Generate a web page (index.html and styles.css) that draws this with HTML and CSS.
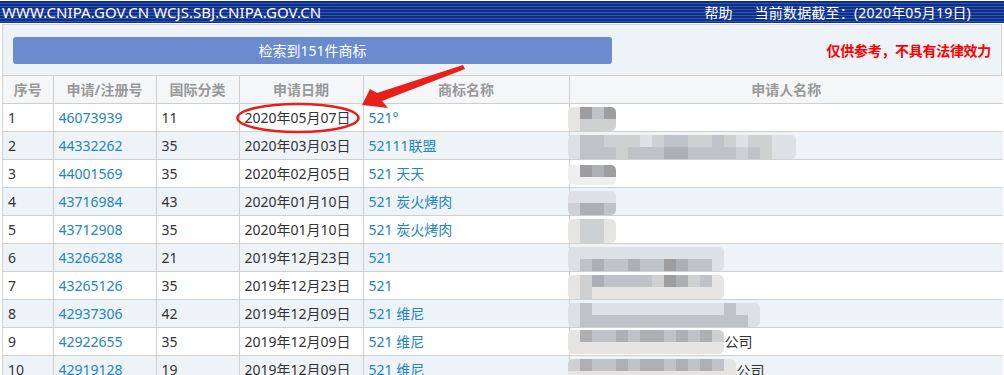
FILE: index.html
```html
<!DOCTYPE html>
<html lang="zh-CN">
<head>
<meta charset="utf-8">
<title>商标检索</title>
<link rel="stylesheet" href="styles.css">
</head>
<body>
<div class="topbar">
  <span class="site">WWW.CNIPA.GOV.CN WCJS.SBJ.CNIPA.GOV.CN</span>
  <span class="help">帮助</span>
  <span class="date">当前数据截至：(2020年05月19日)</span>
</div>
<div class="panel">
  <div class="toolbar">
    <div class="result-btn">检索到151件商标</div>
    <div class="notice">仅供参考，不具有法律效力</div>
  </div>
  <table class="grid">
    <colgroup>
      <col class="c-no"><col class="c-reg"><col class="c-cls"><col class="c-date"><col class="c-name"><col class="c-app">
    </colgroup>
    <thead>
      <tr><th>序号</th><th>申请/注册号</th><th>国际分类</th><th>申请日期</th><th>商标名称</th><th>申请人名称</th></tr>
    </thead>
    <tbody>
      <tr><td>1</td><td class="lnk">46073939</td><td>11</td><td>2020年05月07日</td><td class="lnk">521°</td>
        <td><span class="mosaic"><i class="a"></i><i class="a"></i><i class="e"></i><i class="b"></i><i class="c"></i><i class="b"></i><i class="e"></i><i class="b"></i></span></td></tr>
      <tr><td>2</td><td class="lnk">44332262</td><td>35</td><td>2020年03月03日</td><td class="lnk">52111联盟</td>
        <td><span class="mosaic"><i class="f"></i><i class="f"></i><i class="c"></i><i class="c"></i><i class="c"></i><i class="c"></i><i class="b"></i><i class="c"></i><i class="b"></i><i class="b"></i><i class="b"></i><i class="c"></i><i class="f"></i><i class="c"></i><i class="b"></i><i class="c"></i><i class="c"></i><i class="d"></i><i class="c"></i><i class="d"></i><i class="b"></i><i class="c"></i><i class="b"></i><i class="c"></i><i class="c"></i><i class="c"></i><i class="b"></i><i class="c"></i><i class="f"></i><i class="b"></i><i class="b"></i><i class="c"></i><i class="b"></i><i class="b"></i><i class="f"></i><i class="f"></i><i class="f"></i><i class="f"></i></span></td></tr>
      <tr><td>3</td><td class="lnk">44001569</td><td>35</td><td>2020年02月05日</td><td class="lnk">521 天天</td>
        <td><span class="mosaic m-one"><i class="w"></i><i class="w"></i><i class="e"></i><i class="w"></i><i class="d"></i><i class="w"></i><i class="e"></i><i class="w"></i></span></td></tr>
      <tr><td>4</td><td class="lnk">43716984</td><td>43</td><td>2020年01月10日</td><td class="lnk">521 炭火烤肉</td>
        <td><span class="mosaic"><i class="f"></i><i class="b"></i><i class="f"></i><i class="d"></i><i class="f"></i><i class="d"></i><i class="f"></i><i class="c"></i></span></td></tr>
      <tr><td>5</td><td class="lnk">43712908</td><td>35</td><td>2020年01月10日</td><td class="lnk">521 炭火烤肉</td>
        <td><span class="mosaic"><i class="a"></i><i class="a"></i><i class="b"></i><i class="b"></i><i class="b"></i><i class="b"></i><i class="a"></i><i class="a"></i></span></td></tr>
      <tr><td>6</td><td class="lnk">43266288</td><td>21</td><td>2019年12月23日</td><td class="lnk">521</td>
        <td><span class="mosaic"><i class="f"></i><i class="f"></i><i class="f"></i><i class="c"></i><i class="f"></i><i class="d"></i><i class="f"></i><i class="c"></i><i class="f"></i><i class="c"></i><i class="f"></i><i class="d"></i><i class="f"></i><i class="c"></i><i class="f"></i><i class="c"></i><i class="f"></i><i class="e"></i><i class="f"></i><i class="d"></i><i class="f"></i><i class="c"></i><i class="f"></i><i class="c"></i><i class="f"></i><i class="f"></i></span></td></tr>
      <tr><td>7</td><td class="lnk">43265126</td><td>35</td><td>2019年12月23日</td><td class="lnk">521</td>
        <td><span class="mosaic"><i class="a"></i><i class="a"></i><i class="b"></i><i class="b"></i><i class="d"></i><i class="a"></i><i class="c"></i><i class="a"></i><i class="c"></i><i class="a"></i><i class="c"></i><i class="a"></i><i class="c"></i><i class="a"></i><i class="b"></i><i class="a"></i><i class="e"></i><i class="a"></i><i class="d"></i><i class="a"></i><i class="b"></i><i class="a"></i><i class="c"></i><i class="a"></i><i class="a"></i><i class="a"></i></span></td></tr>
      <tr><td>8</td><td class="lnk">42937306</td><td>42</td><td>2019年12月09日</td><td class="lnk">521 维尼</td>
        <td><span class="mosaic"><i class="f"></i><i class="f"></i><i class="c"></i><i class="c"></i><i class="f"></i><i class="c"></i><i class="f"></i><i class="c"></i><i class="f"></i><i class="c"></i><i class="f"></i><i class="c"></i><i class="f"></i><i class="c"></i><i class="f"></i><i class="c"></i><i class="f"></i><i class="c"></i><i class="f"></i><i class="c"></i><i class="f"></i><i class="c"></i><i class="f"></i><i class="c"></i><i class="f"></i><i class="c"></i><i class="c"></i><i class="c"></i><i class="f"></i><i class="c"></i><i class="f"></i><i class="f"></i></span></td></tr>
      <tr><td>9</td><td class="lnk">42922655</td><td>35</td><td>2019年12月09日</td><td class="lnk">521 维尼</td>
        <td><span class="mosaic"><i class="a"></i><i class="a"></i><i class="d"></i><i class="a"></i><i class="c"></i><i class="a"></i><i class="c"></i><i class="a"></i><i class="d"></i><i class="a"></i><i class="c"></i><i class="a"></i><i class="d"></i><i class="a"></i><i class="d"></i><i class="a"></i><i class="c"></i><i class="a"></i><i class="d"></i><i class="a"></i><i class="c"></i><i class="a"></i><i class="d"></i><i class="a"></i><i class="b"></i><i class="a"></i></span><span class="tail">公司</span></td></tr>
      <tr><td>10</td><td class="lnk">42919128</td><td>19</td><td>2019年12月09日</td><td class="lnk">521 维尼</td>
        <td><span class="mosaic"><i class="b"></i><i class="a"></i><i class="d"></i><i class="a"></i><i class="c"></i><i class="a"></i><i class="c"></i><i class="a"></i><i class="d"></i><i class="a"></i><i class="c"></i><i class="a"></i><i class="d"></i><i class="a"></i><i class="d"></i><i class="a"></i><i class="c"></i><i class="a"></i><i class="d"></i><i class="a"></i><i class="c"></i><i class="a"></i><i class="d"></i><i class="a"></i><i class="c"></i><i class="a"></i><i class="a"></i><i class="a"></i></span><span class="tail">公司</span></td></tr>
    </tbody>
  </table>
</div>
<svg class="annot" width="1004" height="375" viewBox="0 0 1004 375" aria-hidden="true">
  <ellipse cx="298" cy="118" rx="60.5" ry="14" fill="none" stroke="#e8201c" stroke-width="2.6"/>
  <polygon points="362,105 370,89 377,93 463,65 465,69 382,101 388,108" fill="#e8201c"/>
</svg>
</body>
</html>
```
FILE: styles.css
```css
* { box-sizing: border-box; }
html, body { margin: 0; padding: 0; }
body {
  width: 1004px;
  height: 375px;
  overflow: hidden;
  background: #fff;
  font-family: "Noto Sans", "Noto Sans CJK SC", sans-serif;
  font-size: 14px;
  color: #333;
  position: relative;
}
.topbar {
  margin-top: 1px;
  height: 22px;
  display: flex;
  align-items: center;
  padding: 0 2px;
  color: #fff;
  font-size: 14px;
  background: repeating-linear-gradient(to bottom, #0d2e8b 0, #0d2e8b 2px, #3356aa 2px, #3356aa 3px);
  border-bottom: 1px solid #0d2e8b;
  white-space: nowrap;
}
.topbar .site { font-size: 15px; letter-spacing: 0.05px; }
.topbar .help { margin-left: auto; }
.topbar .date { margin-left: 22px; margin-right: 31px; letter-spacing: 0.2px; }
.panel {
  margin: 1px 2px 0;
  border: 1px solid #cfd3d8;
  border-bottom: none;
  background: #eef3f8;
}
.toolbar {
  height: 50px;
  display: flex;
  align-items: center;
  padding: 0 10px 0 10px;
}
.result-btn {
  width: 599px;
  height: 27px;
  border-radius: 3px;
  background: #6a8ccf;
  color: #fff;
  display: flex;
  align-items: center;
  justify-content: center;
  font-size: 14px;
}
.notice {
  margin-left: auto;
  color: #f00;
  font-weight: 700;
  font-size: 14px;
  letter-spacing: -0.3px;
}
.grid {
  width: 1000px;
  border-collapse: collapse;
  table-layout: fixed;
}
.c-no { width: 50px; }
.c-reg { width: 103px; }
.c-cls { width: 83px; }
.c-date { width: 124px; }
.c-name { width: 206px; }
.c-app { width: 434px; }
.grid th, .grid td {
  height: 28px;
  border: 1px solid #cfcfcf;
  padding: 0 0 0 5px;
  white-space: nowrap;
  overflow: hidden;
  line-height: 26px;
}
.grid tr > :first-child { border-left: none; }
.grid tr > :last-child { border-right: none; }
.grid th {
  background: #f5f6f7;
  color: #999;
  font-weight: 700;
  text-align: center;
  padding: 0;
}
.grid tbody tr:nth-child(odd) td { background: #fff; }
.grid tbody tr:nth-child(even) td { background: #eef3f8; }
.grid td.lnk { color: #2384c6; }
.grid td:last-child { padding-left: 0; overflow: visible; }
.mosaic {
  display: inline-grid;
  grid-template-rows: 12px 12px;
  grid-auto-flow: column;
  grid-auto-columns: 12px;
  vertical-align: middle;
  margin-left: -2px;
  filter: blur(0.4px);
  border-radius: 5px;
  overflow: hidden;
}
.mosaic i { display: block; }
.mosaic .a { background: #e6e5e4; }
.mosaic .b { background: #cfd0d2; }
.mosaic .c { background: #bfc2c6; }
.mosaic .d { background: #adafb2; }
.mosaic .e { background: #9e9da0; }
.mosaic .f { background: #dde1e6; }
.mosaic .w { background: #efefef; }
.mosaic.m-one { grid-template-rows: 12px 8px; }
.tail { vertical-align: middle; margin-left: 1px; }
.annot {
  position: absolute;
  top: 0;
  left: 0;
  pointer-events: none;
}
```
